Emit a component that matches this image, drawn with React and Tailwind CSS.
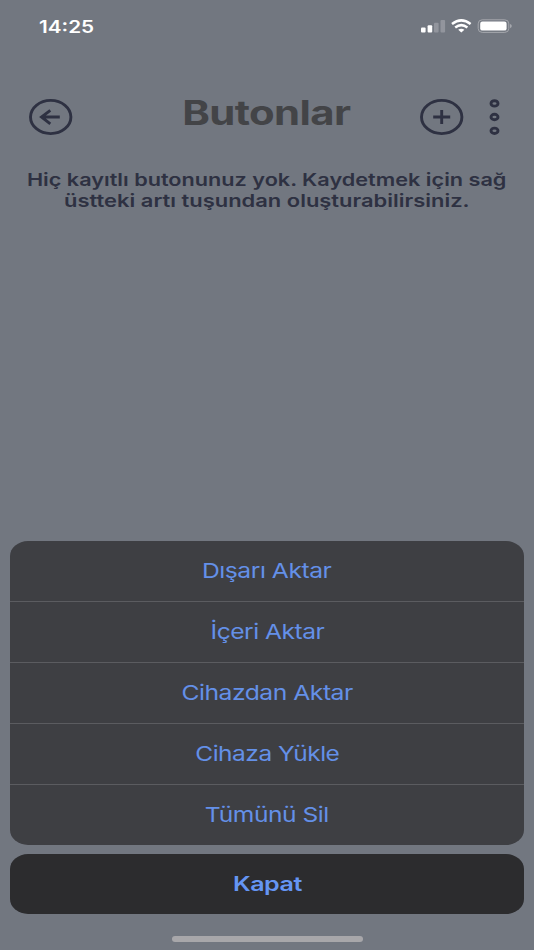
import React from 'react';

const actions = [
  { label: 'Dışarı Aktar', stretch: 'scale-x-[1.205]' },
  { label: 'İçeri Aktar', stretch: 'scale-x-[1.2]' },
  { label: 'Cihazdan Aktar', stretch: 'scale-x-[1.205]' },
  { label: 'Cihaza Yükle', stretch: 'scale-x-[1.195]' },
  { label: 'Tümünü Sil', stretch: 'scale-x-[1.2]' },
];

function StatusIcons() {
  return (
    <svg width="92" height="16" viewBox="0 0 92 16" className="mt-[18px]">
      {/* Signal */}
      <rect x="1" y="9.5" width="4.6" height="5" rx="1" fill="#fff" />
      <rect x="7.6" y="7.2" width="4.6" height="7.3" rx="1" fill="#fff" />
      <rect x="14" y="4.8" width="4.6" height="9.7" rx="1" fill="#92959d" />
      <rect x="20.5" y="2" width="4.6" height="12.5" rx="1" fill="#92959d" />
      {/* Wifi */}
      <g fill="none" stroke="#fff" strokeWidth="2.5">
        <path d="M32 6 Q41.3 -1.2 50.6 6" />
        <path d="M35.2 9.4 Q41.3 4.8 47.4 9.4" />
      </g>
      <path d="M38.2 11.8 Q41.3 9.6 44.4 11.8 L41.3 14.6 Z" fill="#fff" />
      {/* Battery */}
      <rect x="58.2" y="1.8" width="30.6" height="12.6" rx="4" fill="none" stroke="#a5a7ad" strokeWidth="1" />
      <rect x="60.2" y="3.6" width="26.4" height="9" rx="2.2" fill="#fff" />
      <path d="M90 6 Q91.8 6.6 91.8 8.1 Q91.8 9.6 90 10.2 Z" fill="#a5a7ad" />
    </svg>
  );
}

export default function App() {
  return (
    <div className="w-[534px] h-[950px] overflow-hidden flex flex-col bg-[#727780] font-['Inter','Liberation_Sans',sans-serif]">
      {/* Status bar */}
      <div className="h-[90px] shrink-0 flex justify-between pl-[39px] pr-[22px]">
        <span className="mt-[17px] h-5 leading-5 text-[17px] font-semibold text-white origin-left scale-x-[1.22]">14:25</span>
        <StatusIcons />
      </div>

      {/* Header */}
      <header className="h-[54px] shrink-0 flex justify-between pl-[28px] pr-[32px] text-[#2e3142]">
        <button className="w-[154px] flex items-center">
          <svg width="46" height="38" viewBox="0 0 46 38" fill="none" stroke="currentColor" strokeWidth="2.9">
            <ellipse cx="22.7" cy="19" rx="20.2" ry="16.6" />
            <path d="M31.8 19H13.5M22.3 12.3L13.5 19L22.3 25.8" />
          </svg>
        </button>
        <h1 className="w-[168px] h-[46px] flex justify-center items-center whitespace-nowrap text-[33.5px] font-bold tracking-[-0.015em] text-[#434447]">
          <span className="scale-x-[1.25]">Butonlar</span>
        </h1>
        <div className="w-[152px] flex justify-end items-center gap-[23px]">
          <svg width="46" height="38" viewBox="0 0 46 38" fill="none" stroke="currentColor" strokeWidth="2.9">
            <ellipse cx="22.7" cy="19" rx="20.2" ry="16.6" />
            <path d="M14.2 19H31.2M22.7 12V26" />
          </svg>
          <svg width="14" height="38" viewBox="0 0 14 38" fill="none" stroke="currentColor" strokeWidth="2.9">
            <ellipse cx="6.5" cy="5.4" rx="3.5" ry="2.7" />
            <ellipse cx="6.5" cy="19" rx="3.5" ry="2.7" />
            <ellipse cx="6.5" cy="32.8" rx="3.5" ry="2.7" />
          </svg>
        </div>
      </header>

      <p className="mt-[25px] flex flex-col items-center whitespace-nowrap text-[17.5px] leading-[21px] font-semibold text-[#2e3142]">
        <span className="scale-x-[1.238]">Hiç kayıtlı butonunuz yok. Kaydetmek için sağ</span>
        <span className="scale-x-[1.253]">üstteki artı tuşundan oluşturabilirsiniz.</span>
      </p>

      {/* Action sheet */}
      <div className="mt-auto px-[10px]">
        <div className="overflow-hidden rounded-[18px/15px] bg-[#3e3f43] divide-y divide-[#5b5c60]">
          {actions.map((action) => (
            <button key={action.label} className="w-full h-[61px] last:h-[60px] flex items-center justify-center text-[20.5px] tracking-[-0.02em] text-[#6490e8]">
              <span className={action.stretch}>{action.label}</span>
            </button>
          ))}
        </div>
        <button className="mt-[9px] w-full h-[60px] flex items-center justify-center rounded-[18px/15px] bg-[#2c2c2e] text-[20px] font-semibold tracking-[-0.02em] text-[#6595f3]">
          <span className="scale-x-[1.255]">Kapat</span>
        </button>
      </div>

      {/* Home indicator */}
      <div className="h-[36px] shrink-0 flex justify-center pt-[22px]">
        <div className="w-[191px] h-[6px] rounded-full bg-[#a8a7aa]" />
      </div>
    </div>
  );
}
